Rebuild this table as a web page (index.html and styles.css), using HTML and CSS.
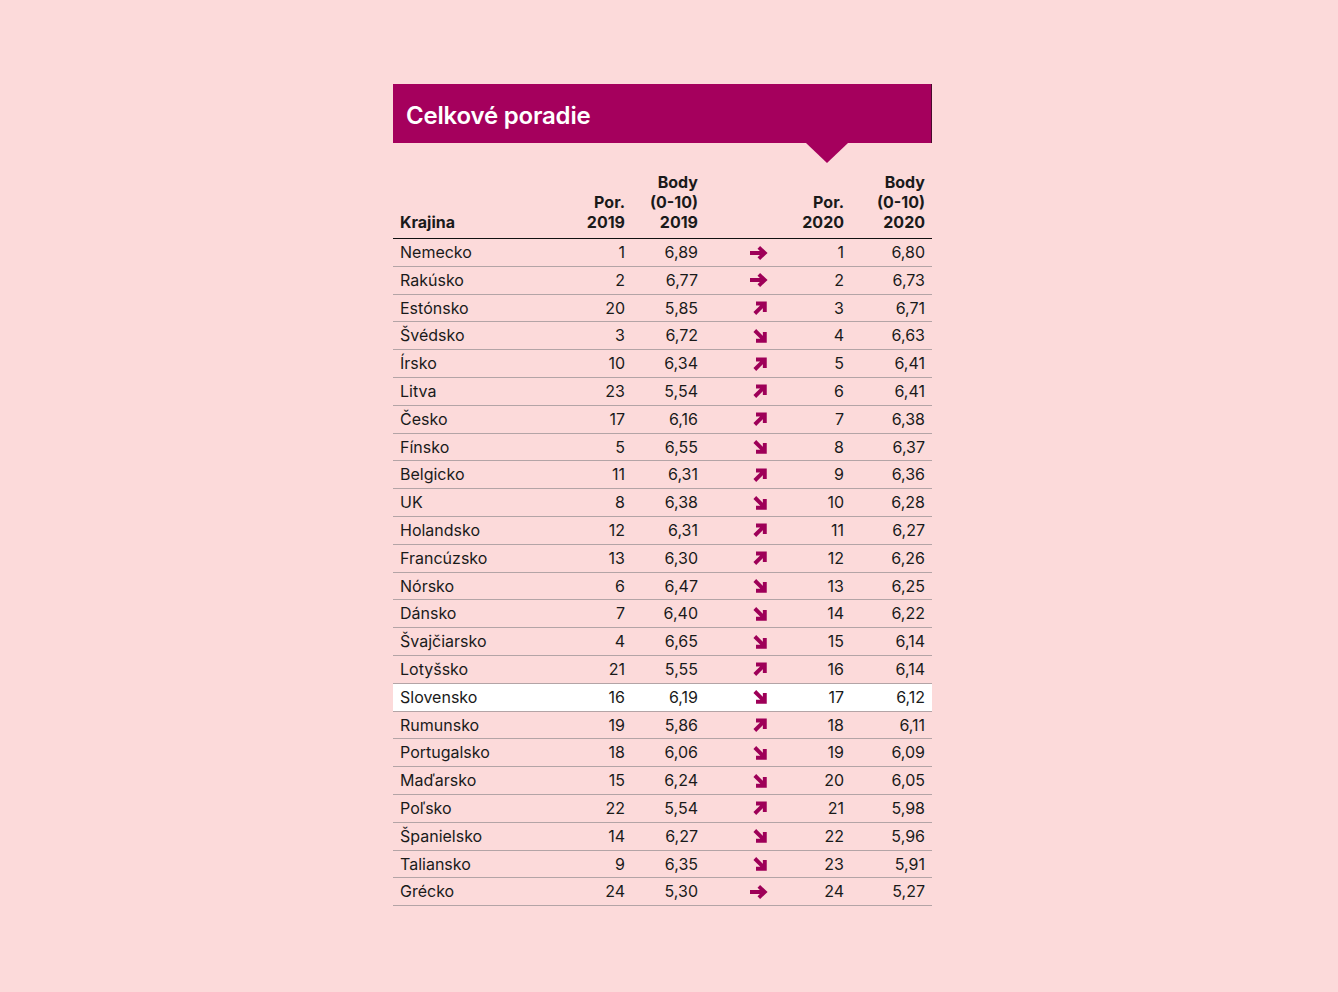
FILE: index.html
```html
<!DOCTYPE html>
<html lang="sk">
<head>
<meta charset="utf-8">
<title>Celkové poradie</title>
<link rel="stylesheet" href="styles.css">
</head>
<body>
<svg width="0" height="0" class="defs">
  <defs>
    <symbol id="a-r" viewBox="0 0 19 14"><path d="M1 7H16M9.8 1.4L15.8 7L9.8 12.6" fill="none" stroke="currentColor" stroke-width="3.8"/></symbol>
    <symbol id="a-u" viewBox="0 0 14 14"><path d="M1.8 12.5L11.5 2.8M3 2.5H11.8V11" fill="none" stroke="currentColor" stroke-width="3.9"/></symbol>
    <symbol id="a-d" viewBox="0 0 14 14"><path d="M1.8 1.5L11.5 11.2M11.8 3V11.8H3" fill="none" stroke="currentColor" stroke-width="3.9"/></symbol>
  </defs>
</svg>
<div class="card">
  <div class="title">Celkové poradie</div>
  <div class="pointer-row"><span class="pointer"></span></div>
  <div class="grid head">
    <div class="c name">Krajina</div>
    <div class="c num"><span>Por.<br>2019</span></div>
    <div class="c num"><span>Body<br>(0-10)<br>2019</span></div>
    <div class="c"></div>
    <div class="c num"><span>Por.<br>2020</span></div>
    <div class="c num"><span>Body<br>(0-10)<br>2020</span></div>
  </div>
  <div id="rows"></div>
</div>
<script src="app.js"></script>
</body>
</html>
```

FILE: app.js
```js
var data = [
["Nemecko",1,"6,89","r",1,"6,80"],
["Rakúsko",2,"6,77","r",2,"6,73"],
["Estónsko",20,"5,85","u",3,"6,71"],
["Švédsko",3,"6,72","d",4,"6,63"],
["Írsko",10,"6,34","u",5,"6,41"],
["Litva",23,"5,54","u",6,"6,41"],
["Česko",17,"6,16","u",7,"6,38"],
["Fínsko",5,"6,55","d",8,"6,37"],
["Belgicko",11,"6,31","u",9,"6,36"],
["UK",8,"6,38","d",10,"6,28"],
["Holandsko",12,"6,31","u",11,"6,27"],
["Francúzsko",13,"6,30","u",12,"6,26"],
["Nórsko",6,"6,47","d",13,"6,25"],
["Dánsko",7,"6,40","d",14,"6,22"],
["Švajčiarsko",4,"6,65","d",15,"6,14"],
["Lotyšsko",21,"5,55","u",16,"6,14"],
["Slovensko",16,"6,19","d",17,"6,12"],
["Rumunsko",19,"5,86","u",18,"6,11"],
["Portugalsko",18,"6,06","d",19,"6,09"],
["Maďarsko",15,"6,24","d",20,"6,05"],
["Poľsko",22,"5,54","u",21,"5,98"],
["Španielsko",14,"6,27","d",22,"5,96"],
["Taliansko",9,"6,35","d",23,"5,91"],
["Grécko",24,"5,30","r",24,"5,27"]
];
var html = "";
data.forEach(function (d) {
  var cls = d[0] === "Slovensko" ? "grid row hl" : "grid row";
  var w = d[3] === "r" ? 19 : 14;
  html += '<div class="' + cls + '">' +
    '<div class="c name">' + d[0] + '</div>' +
    '<div class="c num">' + d[1] + '</div>' +
    '<div class="c num">' + d[2] + '</div>' +
    '<div class="c arrow a-' + d[3] + '"><svg width="' + w + '" height="14"><use href="#a-' + d[3] + '"/></svg></div>' +
    '<div class="c num">' + d[4] + '</div>' +
    '<div class="c num">' + d[5] + '</div>' +
    '</div>';
});
document.getElementById("rows").innerHTML = html;
```

FILE: styles.css
```css
html, body {
  margin: 0;
  padding: 0;
  background: #fcdada;
}
body {
  font-family: Inter, "Open Sans", "Noto Sans", sans-serif;
  color: #1a1a1a;
  min-height: 992px;
}
.defs {
  position: absolute;
  width: 0;
  height: 0;
}
.card {
  width: 539px;
  margin: 84px 0 0 393px;
}
.title {
  height: 59px;
  background: #a5005d;
  border-right: 1px solid #4a0a2c;
  box-sizing: border-box;
  color: #fff;
  font-size: 24px;
  font-weight: 600;
  letter-spacing: -0.2px;
  line-height: 59px;
  padding: 2px 0 0 13px;
}
.pointer-row {
  height: 0;
  position: relative;
}
.pointer {
  position: absolute;
  left: 413px;
  top: 0;
  width: 0;
  height: 0;
  border-left: 21px solid transparent;
  border-right: 21px solid transparent;
  border-top: 20px solid #a5005d;
}
.grid {
  display: grid;
  grid-template-columns: 160px 65px 73px 122px 24px 81px;
  padding: 0 7px;
}
.head {
  padding-top: 29px;
  padding-bottom: 6px;
  border-bottom: 1px solid #111;
  font-weight: 700;
  font-size: 16px;
  line-height: 20px;
  align-items: end;
}
.head .num {
  display: flex;
  justify-content: flex-end;
  white-space: nowrap;
  text-align: right;
}
.row {
  height: 27.8px;
  box-sizing: border-box;
  border-bottom: 1px solid #b3a4a6;
  font-size: 16px;
  line-height: 27px;
  align-items: center;
}
.row.hl {
  background: #fff;
}
.c.name {
  text-align: left;
}
.c.num {
  text-align: right;
}
.c.arrow {
  display: flex;
  justify-content: center;
  align-items: center;
  color: #9e0058;
  height: 27px;
}
.c.arrow.a-r {
  padding-right: 2px;
}
.c.arrow.a-u svg, .c.arrow.a-d svg {
  margin-left: 2px;
}
```
